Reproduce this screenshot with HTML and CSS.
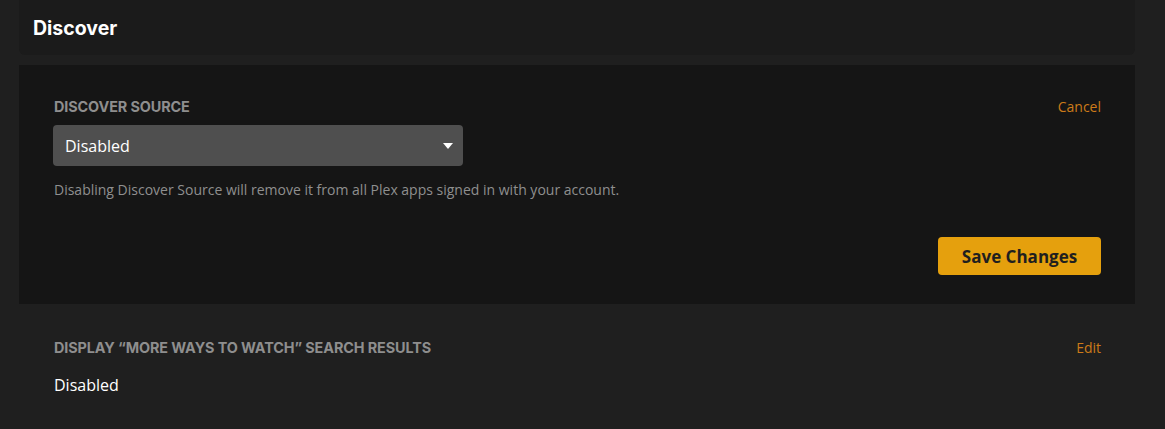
FILE: index.html
```html
<!DOCTYPE html>
<html>
<head>
<meta charset="utf-8">
<link rel="stylesheet" href="styles.css">
</head>
<body>
<div class="page">
  <div class="header"><h1 class="title">Discover</h1></div>
  <section class="panel editing">
    <div class="row-top">
      <div class="label">DISCOVER SOURCE</div>
      <a class="link">Cancel</a>
    </div>
    <div class="select">
      <span class="select-value">Disabled</span>
      <svg class="caret" width="10" height="6" viewBox="0 0 10 6"><path d="M0 0h10L5 6z" fill="#fff"/></svg>
    </div>
    <p class="help">Disabling Discover Source will remove it from all Plex apps signed in with your account.</p>
    <div class="actions"><button class="save">Save Changes</button></div>
  </section>
  <section class="panel plain">
    <div class="row-top">
      <div class="label">DISPLAY “MORE WAYS TO WATCH” SEARCH RESULTS</div>
      <a class="link">Edit</a>
    </div>
    <div class="value">Disabled</div>
  </section>
</div>
</body>
</html>
```
FILE: styles.css
```css
html, body {
  margin: 0;
  padding: 0;
  background: #1f1f1f;
  height: 100%;
}
body {
  font-family: "Open Sans", "Liberation Sans", sans-serif;
  color: #fff;
  overflow: hidden;
}
.page {
  margin: 0 30px 0 19px;
}
.header {
  background: #1b1b1b;
  height: 55px;
  border-radius: 0 0 6px 6px;
  display: flex;
  align-items: center;
  padding-left: 14px;
}
.title {
  margin: 0;
  font-family: Inter, "Liberation Sans", sans-serif;
  font-weight: 700;
  font-size: 19.5px;
  color: #fff;
}
.panel {
  padding: 0 34px 0 35px;
}
.editing {
  margin-top: 10px;
  background: #151515;
  height: 239px;
  padding-top: 31px;
  box-sizing: border-box;
}
.row-top {
  display: flex;
  justify-content: space-between;
  align-items: center;
  height: 20px;
}
.label {
  font-family: Inter, "Liberation Sans", sans-serif;
  font-weight: 700;
  font-size: 14.4px;
  letter-spacing: -0.1px;
  color: #8e8e8e;
}
.link {
  font-size: 14px;
  color: #cc7b19;
}
.select {
  margin-top: 9px;
  width: 410px;
  height: 41px;
  box-sizing: border-box;
  background: #4f4f4f;
  border-radius: 4px;
  display: flex;
  align-items: center;
  justify-content: space-between;
  padding: 0 10px 0 12px;
  margin-left: -1px;
}
.select-value {
  font-size: 16px;
  color: #fff;
}
.help {
  margin: 14px 0 0;
  font-size: 14px;
  line-height: 19px;
  color: #8f8f8f;
}
.actions {
  display: flex;
  justify-content: flex-end;
  margin-top: 38px;
}
.save {
  width: 163px;
  height: 38px;
  background: #e5a00d;
  border: none;
  border-radius: 4px;
  font-family: "Open Sans", "Liberation Sans", sans-serif;
  font-weight: 700;
  font-size: 17px;
  line-height: 40px;
  color: #1f1f1f;
  padding: 0;
}
.plain {
  padding-top: 33px;
}
.value {
  margin-top: 17px;
  font-size: 16px;
  color: #fff;
}
```
